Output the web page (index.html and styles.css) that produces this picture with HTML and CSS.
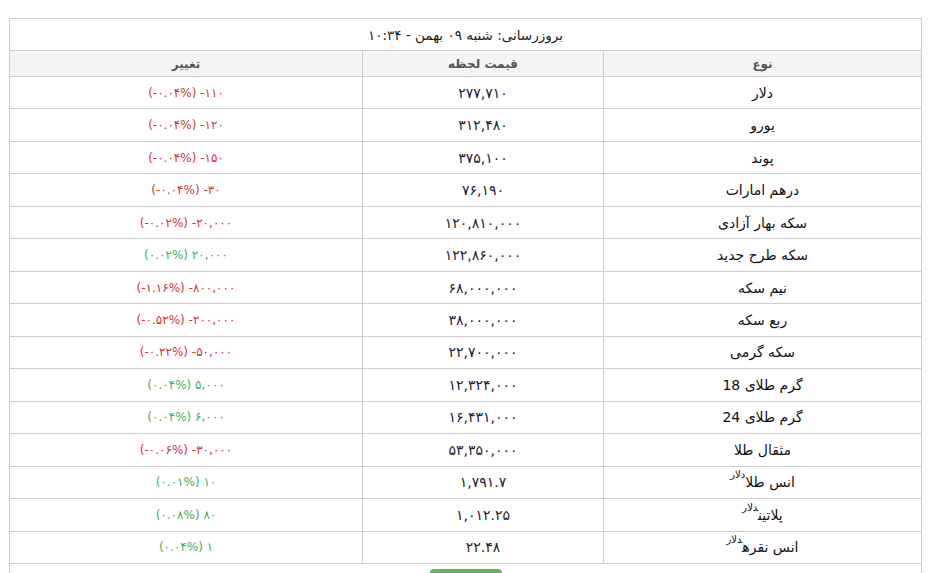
FILE: index.html
```html
<!DOCTYPE html>
<html lang="fa" dir="rtl">
<head>
<meta charset="utf-8">
<title>قیمت ارز و طلا</title>
<link rel="stylesheet" href="styles.css">
</head>
<body>
<div class="wrap">
<table class="rates">
  <colgroup>
    <col class="c-type">
    <col class="c-price">
    <col class="c-change">
  </colgroup>
  <thead>
    <tr class="title-row"><th colspan="3">بروزرسانی: شنبه ۰۹ بهمن - ۱۰:۳۴</th></tr>
    <tr class="head-row"><th>نوع</th><th>قیمت لحظه</th><th>تغییر</th></tr>
  </thead>
  <tbody>
    <tr><td class="name">دلار</td><td class="price">۲۷۷,۷۱۰</td><td class="chg down"><span class="ltr">(-۰.۰۴%) -۱۱۰</span></td></tr>
    <tr><td class="name">یورو</td><td class="price">۳۱۲,۴۸۰</td><td class="chg down"><span class="ltr">(-۰.۰۴%) -۱۲۰</span></td></tr>
    <tr><td class="name">پوند</td><td class="price">۳۷۵,۱۰۰</td><td class="chg down"><span class="ltr">(-۰.۰۴%) -۱۵۰</span></td></tr>
    <tr><td class="name">درهم امارات</td><td class="price">۷۶,۱۹۰</td><td class="chg down"><span class="ltr">(-۰.۰۴%) -۳۰</span></td></tr>
    <tr><td class="name">سکه بهار آزادی</td><td class="price">۱۲۰,۸۱۰,۰۰۰</td><td class="chg down"><span class="ltr">(-۰.۰۲%) -۲۰,۰۰۰</span></td></tr>
    <tr><td class="name">سکه طرح جدید</td><td class="price">۱۲۲,۸۶۰,۰۰۰</td><td class="chg up"><span class="ltr">(۰.۰۲%) ۲۰,۰۰۰</span></td></tr>
    <tr><td class="name">نیم سکه</td><td class="price">۶۸,۰۰۰,۰۰۰</td><td class="chg down"><span class="ltr">(-۱.۱۶%) -۸۰۰,۰۰۰</span></td></tr>
    <tr><td class="name">ربع سکه</td><td class="price">۳۸,۰۰۰,۰۰۰</td><td class="chg down"><span class="ltr">(-۰.۵۲%) -۲۰۰,۰۰۰</span></td></tr>
    <tr><td class="name">سکه گرمی</td><td class="price">۲۲,۷۰۰,۰۰۰</td><td class="chg down"><span class="ltr">(-۰.۲۲%) -۵۰,۰۰۰</span></td></tr>
    <tr><td class="name">گرم طلای 18</td><td class="price">۱۲,۳۲۴,۰۰۰</td><td class="chg up"><span class="ltr">(۰.۰۴%) ۵,۰۰۰</span></td></tr>
    <tr><td class="name">گرم طلای 24</td><td class="price">۱۶,۴۳۱,۰۰۰</td><td class="chg up"><span class="ltr">(۰.۰۴%) ۶,۰۰۰</span></td></tr>
    <tr><td class="name">مثقال طلا</td><td class="price">۵۳,۳۵۰,۰۰۰</td><td class="chg down"><span class="ltr">(-۰.۰۶%) -۳۰,۰۰۰</span></td></tr>
    <tr><td class="name">انس طلا<sup>دلار</sup></td><td class="price">۱,۷۹۱.۷</td><td class="chg up"><span class="ltr">(۰.۰۱%) ۱۰</span></td></tr>
    <tr><td class="name">پلاتین<sup>دلار</sup></td><td class="price">۱,۰۱۲.۲۵</td><td class="chg up"><span class="ltr">(۰.۰۸%) ۸۰</span></td></tr>
    <tr><td class="name">انس نقره<sup>دلار</sup></td><td class="price">۲۲.۴۸</td><td class="chg up"><span class="ltr">(۰.۰۴%) ۱</span></td></tr>
    <tr class="foot-row"><td colspan="3"><button class="more" type="button">بیشتر</button></td></tr>
  </tbody>
</table>
</div>
</body>
</html>
```
FILE: styles.css
```css
html, body {
  margin: 0;
  padding: 0;
  background: #fff;
}
body {
  font-family: "DejaVu Sans", "Noto Sans", sans-serif;
  color: #111;
}
.wrap {
  padding: 18px 7px 0 9px;
}
.rates {
  width: 100%;
  border-collapse: collapse;
  table-layout: fixed;
  direction: rtl;
}
.c-type { width: 318px; }
.c-price { width: 241px; }
.rates th,
.rates td {
  border: 1px solid #cccccc;
  text-align: center;
  vertical-align: middle;
  padding: 0;
}
.title-row th {
  height: 31px;
  font-weight: normal;
  font-size: 13.5px;
  color: #222;
}
.head-row th {
  height: 25px;
  background: #f4f4f4;
  font-weight: bold;
  font-size: 12px;
  color: #555;
}
.rates tbody td {
  height: 31.47px;
}
.name {
  font-size: 14px;
  color: #111;
}
.name sup {
  font-size: 10px;
  vertical-align: 9px;
  line-height: 0;
}
.price {
  font-size: 14px;
  color: #1c2233;
}
.chg {
  font-size: 12px;
}
.ltr {
  direction: ltr;
  unicode-bidi: isolate;
  display: inline-block;
}
.down { color: #d0343c; }
.up { color: #3fae5a; }
.foot-row td {
  height: 20px;
  vertical-align: top;
  padding-top: 5px;
  border-bottom: none;
}
.more {
  width: 72px;
  height: 30px;
  padding: 10px 0 0;
  line-height: 16px;
  border: none;
  border-radius: 4px 4px 0 0;
  background: #5cb85c;
  color: #fff;
  font-family: inherit;
  font-size: 12px;
  vertical-align: top;
}
```
